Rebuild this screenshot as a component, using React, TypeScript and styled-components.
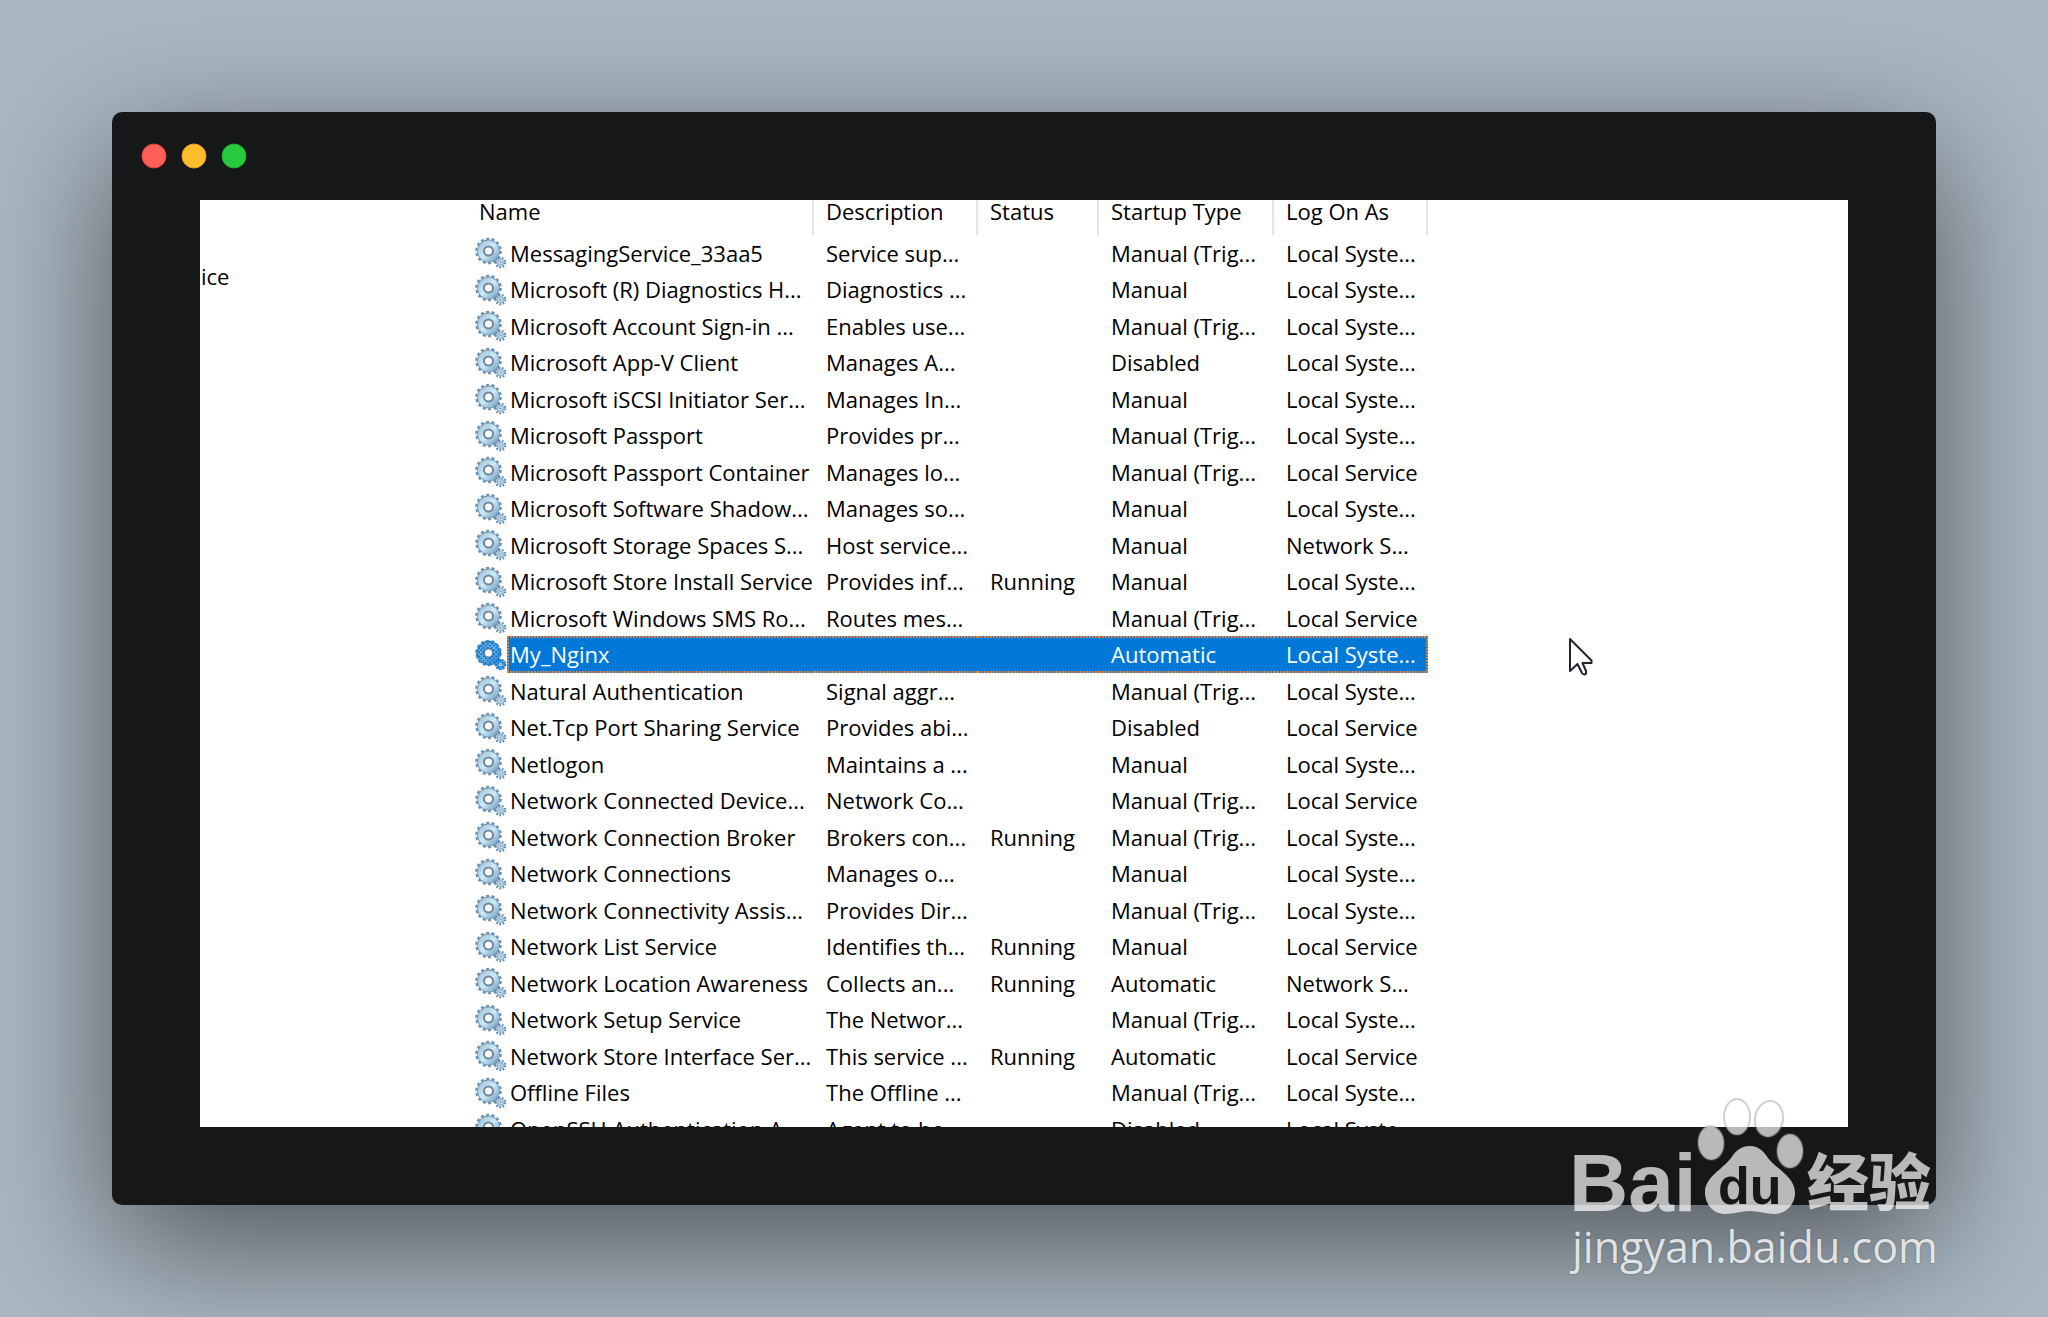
import React from "react";
import styled, { createGlobalStyle, css } from "styled-components";

const GlobalStyle = createGlobalStyle`
  * { box-sizing: border-box; }
  body { margin: 0; background: #abb8c3; }
`;

const Page = styled.main`
  position: relative;
  display: flex;
  height: 100vh;
  padding: 112px;
  overflow: hidden;
  background: #abb8c3;
  font-family: "Open Sans", "Noto Sans", sans-serif;
`;

const Window = styled.section`
  flex: 1;
  min-width: 0;
  display: flex;
  flex-direction: column;
  border-radius: 10px;
  background: #151718;
  box-shadow: 0 40px 136px rgba(0, 0, 0, 0.55);
`;

const TitleBar = styled.header`
  height: 88px;
  padding: 30px 28px;
`;

const Panel = styled.div`
  flex: 1;
  min-height: 0;
  margin: 0 88px 78px;
  display: flex;
  overflow: hidden;
  background: #fff;
  color: #000;
  font-size: 22px;
  line-height: 22px;
`;

const Sidebar = styled.aside`
  flex: none;
  width: 275px;
  padding: 65px 0 0 1px;
`;

const Services = styled.table`
  flex: none;
  align-self: flex-start;
  width: 953px;
  table-layout: fixed;
  border-spacing: 0;
`;

const Col = styled.col<{ $width: number }>`
  width: ${(p) => p.$width}px;
`;

const Head = styled.th<{ $first?: boolean }>`
  height: 35px;
  padding: 0 0 0 ${(p) => (p.$first ? 4 : 12)}px;
  border-right: 2px solid #e5e5e5;
  font-weight: 400;
  text-align: left;
  vertical-align: top;
  white-space: nowrap;
`;

const Row = styled.tr`
  height: 36px;
  &:nth-child(even) { height: 37px; }
`;

const IconCell = styled.td`
  padding: 0;
  line-height: 0;
`;

const dots = "#ff8728 0 1px, #b08066 1px 2px, #0078d7 2px 3px";

const Cell = styled.td<{ $selected: boolean; $name?: boolean }>`
  padding: 0 0 1px ${(p) => (p.$name ? 3 : 12)}px;
  white-space: nowrap;
  ${(p) =>
    p.$selected &&
    css`
      color: #fff;
      background:
        repeating-linear-gradient(90deg, ${dots}) top / 100% 2px no-repeat,
        repeating-linear-gradient(90deg, ${dots}) bottom / 100% 2px no-repeat,
        #0078d7;
      &:last-child {
        background:
          repeating-linear-gradient(90deg, ${dots}) top / 100% 2px no-repeat,
          repeating-linear-gradient(90deg, ${dots}) bottom / 100% 2px no-repeat,
          repeating-linear-gradient(${dots}) right / 2px 100% no-repeat,
          #0078d7;
      }
    `}
  ${(p) =>
    p.$selected &&
    p.$name &&
    css`
      background:
        repeating-linear-gradient(90deg, ${dots}) top / 100% 2px no-repeat,
        repeating-linear-gradient(90deg, ${dots}) bottom / 100% 2px no-repeat,
        repeating-linear-gradient(${dots}) left / 2px 100% no-repeat,
        #0078d7;
    `}
`;

const Pointer = styled.svg`
  position: absolute;
  left: 1568px;
  top: 637px;
`;

const Watermark = styled.div`
  position: absolute;
  right: 112px;
  bottom: 41px;
  width: 364px;
  color: rgba(255, 255, 255, 0.82);
`;

const Logo = styled.svg`
  display: block;
  width: 364px;
  height: 120px;
  overflow: visible;
`;

const Site = styled.div`
  font-size: 43px;
  font-weight: 500;
  line-height: 58px;
  white-space: nowrap;
  text-shadow: 0 0 2px rgba(0, 0, 0, 0.3);
`;

const SYS = "Local Syste...";
const LOC = "Local Service";
const NET = "Network S...";
const TRIG = "Manual (Trig...";

const services: [string, string, string, string, string][] = [
  ["MessagingService_33aa5", "Service sup...", "", TRIG, SYS],
  ["Microsoft (R) Diagnostics H...", "Diagnostics ...", "", "Manual", SYS],
  ["Microsoft Account Sign-in ...", "Enables use...", "", TRIG, SYS],
  ["Microsoft App-V Client", "Manages A...", "", "Disabled", SYS],
  ["Microsoft iSCSI Initiator Ser...", "Manages In...", "", "Manual", SYS],
  ["Microsoft Passport", "Provides pr...", "", TRIG, SYS],
  ["Microsoft Passport Container", "Manages lo...", "", TRIG, LOC],
  ["Microsoft Software Shadow...", "Manages so...", "", "Manual", SYS],
  ["Microsoft Storage Spaces S...", "Host service...", "", "Manual", NET],
  ["Microsoft Store Install Service", "Provides inf...", "Running", "Manual", SYS],
  ["Microsoft Windows SMS Ro...", "Routes mes...", "", TRIG, LOC],
  ["My_Nginx", "", "", "Automatic", SYS],
  ["Natural Authentication", "Signal aggr...", "", TRIG, SYS],
  ["Net.Tcp Port Sharing Service", "Provides abi...", "", "Disabled", LOC],
  ["Netlogon", "Maintains a ...", "", "Manual", SYS],
  ["Network Connected Device...", "Network Co...", "", TRIG, LOC],
  ["Network Connection Broker", "Brokers con...", "Running", TRIG, SYS],
  ["Network Connections", "Manages o...", "", "Manual", SYS],
  ["Network Connectivity Assis...", "Provides Dir...", "", TRIG, SYS],
  ["Network List Service", "Identifies th...", "Running", "Manual", LOC],
  ["Network Location Awareness", "Collects an...", "Running", "Automatic", NET],
  ["Network Setup Service", "The Networ...", "", TRIG, SYS],
  ["Network Store Interface Ser...", "This service ...", "Running", "Automatic", LOC],
  ["Offline Files", "The Offline ...", "", TRIG, SYS],
  ["OpenSSH Authentication A...", "Agent to ho...", "", "Disabled", SYS],
];

const GearIcon = ({ selected }: { selected: boolean }) => (
  <svg width="32" height="34" viewBox="0 0 32 34" aria-hidden="true">
    <defs>
      <linearGradient id="gear" x1="0" y1="0" x2="1" y2="1">
        <stop offset="0" stopColor="#a9c6dc" />
        <stop offset="0.5" stopColor="#cdebf8" />
        <stop offset="1" stopColor="#82acca" />
      </linearGradient>
      <pattern id="dither" width="3" height="3" patternUnits="userSpaceOnUse" patternTransform="rotate(45)">
        <rect width="3" height="3" fill="#0078d7" fillOpacity="0.35" />
        <rect width="2" height="2" fill="#0078d7" />
      </pattern>
    </defs>
    <circle cx="13.5" cy="15" r="11.800" fill="none" stroke="#6c90b0" strokeWidth="3" strokeDasharray="2.9 2.396" />
    <circle cx="13.5" cy="15" r="8" fill="none" stroke="#7899b6" strokeWidth="6.800" />
    <circle cx="13.5" cy="15" r="7.800" fill="none" stroke="url(#gear)" strokeWidth="5.500" />
    <circle cx="13.5" cy="15" r="4.500" fill="#fff" stroke="#71869f" strokeWidth="2" />
    <circle cx="25.500" cy="26.500" r="4.600" fill="none" stroke="#5f86a8" strokeWidth="2.400" strokeDasharray="1.7 1.511" />
    <circle cx="25.500" cy="26.500" r="2.800" fill="#e8f4fa" stroke="#9cc0da" strokeWidth="2" />
    <circle cx="25.500" cy="26.500" r="1" fill="#6d87a4" />
    {selected && (
      <g fill="none" stroke="url(#dither)">
        <circle cx="13.5" cy="15" r="8.500" strokeWidth="8" />
        <circle cx="25.500" cy="26.500" r="3.500" strokeWidth="4" />
      </g>
    )}
  </svg>
);

export default function App() {
  return (
    <>
      <GlobalStyle />
      <Page>
        <Window>
          <TitleBar>
            <svg width="108" height="28" viewBox="0 0 54 14" aria-hidden="true">
              <circle cx="7" cy="7" r="6" fill="#ff5f56" stroke="#e0443e" strokeWidth=".5" />
              <circle cx="27" cy="7" r="6" fill="#ffbd2e" stroke="#dea123" strokeWidth=".5" />
              <circle cx="47" cy="7" r="6" fill="#27c93f" stroke="#1aab29" strokeWidth=".5" />
            </svg>
          </TitleBar>
          <Panel>
            <Sidebar>ice</Sidebar>
            <Services>
              <colgroup>
                <Col $width={32} />
                <Col $width={307} />
                <Col $width={164} />
                <Col $width={121} />
                <Col $width={175} />
                <Col $width={154} />
              </colgroup>
              <thead>
                <tr>
                  <Head colSpan={2} $first>Name</Head>
                  <Head>Description</Head>
                  <Head>Status</Head>
                  <Head>Startup Type</Head>
                  <Head>Log On As</Head>
                </tr>
              </thead>
              <tbody>
                {services.map(([name, ...rest]) => {
                  const selected = name === "My_Nginx";
                  return (
                    <Row key={name}>
                      <IconCell><GearIcon selected={selected} /></IconCell>
                      <Cell $name $selected={selected}>{name}</Cell>
                      {rest.map((value, i) => (
                        <Cell key={i} $selected={selected}>{value}</Cell>
                      ))}
                    </Row>
                  );
                })}
              </tbody>
            </Services>
          </Panel>
        </Window>
        <Pointer width="26" height="40" viewBox="0 0 26 40" aria-hidden="true">
          <path d="M2 2V34L9.500 27L14 36Q16 38.500 18 36.500V34L14.500 26H23.500V23.500Z" fill="#fff" stroke="#23232d" strokeWidth="2" strokeLinejoin="round" />
        </Pointer>
        <Watermark>
          <Logo viewBox="0 0 364 120" role="img" aria-label="Baidu">
            <g fill="#fff" fillOpacity="0.7" stroke="#777" strokeOpacity="0.35" strokeWidth="2">
              <ellipse cx="139" cy="45" rx="13" ry="17" transform="rotate(-4 139 45)" />
              <ellipse cx="165" cy="19" rx="13" ry="18" />
              <ellipse cx="197" cy="21" rx="14" ry="18" transform="rotate(10 197 21)" />
              <ellipse cx="218" cy="53" rx="13" ry="17" />
            </g>
            <g fill="#fff" fillOpacity="0.7">
              <path d="M178 48C187 48 192 54 196 60C203 70 223 78 223 95C223 108 212 116 203 116C193 116 187 113 178 113C169 113 163 116 153 116C142 116 133 107 133 94C133 79 151 71 159 60C163 54 168 48 178 48Z" />
              <text x="-3" y="113" fontFamily="Liberation Sans, sans-serif" fontWeight="700" fontSize="82" stroke="#fff" strokeOpacity="0">Bai</text>
              <text x="235" y="108" fontFamily="Noto Sans CJK SC, sans-serif" fontWeight="900" fontSize="62">经验</text>
            </g>
            <text x="146" y="106" fill="#151718" fontFamily="Liberation Sans, sans-serif" fontWeight="700" fontSize="52">du</text>
          </Logo>
          <Site>jingyan.baidu.com</Site>
        </Watermark>
      </Page>
    </>
  );
}
